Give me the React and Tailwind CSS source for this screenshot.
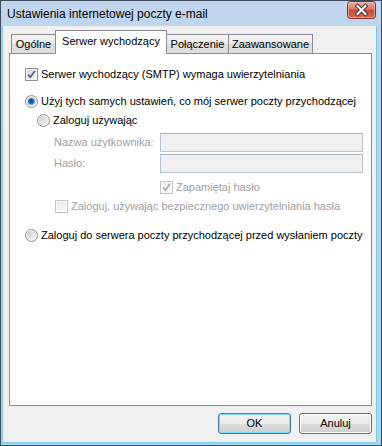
import React from "react";

const font = { fontFamily: '"Liberation Sans", Arial, sans-serif' };

function CheckBox({ checked, disabled, id }) {
  const border = disabled ? "#c2c2c2" : "#8f8f8f";
  const c1 = disabled ? "#ececec" : "#d2d6dc";
  const c2 = disabled ? "#f7f7f7" : "#f6f7f9";
  const check = disabled ? "#a9a9a9" : "#4b5f91";
  return (
    <svg width="13" height="13" viewBox="0 0 13 13" className="shrink-0">
      <defs>
        <linearGradient id={id} x1="0" y1="0" x2="1" y2="1">
          <stop offset="0" stopColor={c1} />
          <stop offset="1" stopColor={c2} />
        </linearGradient>
      </defs>
      <rect x="0.5" y="0.5" width="12" height="12" fill="#fafafa" stroke={border} />
      <rect x="2" y="2" width="9" height="9" fill={`url(#${id})`} />
      {checked && (
        <path d="M3.2 6.6 L5.3 9.2 L9.9 2.9" fill="none" stroke={check} strokeWidth="1.7" />
      )}
    </svg>
  );
}

function Radio({ checked, id }) {
  return (
    <svg width="13" height="13" viewBox="0 0 13 13" className="shrink-0">
      <defs>
        <linearGradient id={id + "o"} x1="0" y1="0" x2="1" y2="1">
          <stop offset="0" stopColor="#c9cbce" />
          <stop offset="1" stopColor="#f8f8f8" />
        </linearGradient>
        <radialGradient id={id + "d"} cx="0.45" cy="0.45" r="0.6">
          <stop offset="0" stopColor="#0f3f78" />
          <stop offset="0.55" stopColor="#2a6db3" />
          <stop offset="1" stopColor="#8fcdf3" />
        </radialGradient>
      </defs>
      <circle cx="6.5" cy="6.5" r="6" fill="#f4f4f4" stroke="#8e8f8f" />
      <circle cx="6.5" cy="6.5" r="4.6" fill={`url(#${id}o)`} />
      {checked && <circle cx="6.5" cy="6.5" r="3.6" fill={`url(#${id}d)`} />}
    </svg>
  );
}

function CloseButton() {
  return (
    <svg width="29" height="18" viewBox="0 0 29 18">
      <defs>
        <linearGradient id="closeg" x1="0" y1="0" x2="0" y2="1">
          <stop offset="0" stopColor="#eab0a5" />
          <stop offset="0.45" stopColor="#d9796a" />
          <stop offset="0.5" stopColor="#c8493a" />
          <stop offset="1" stopColor="#d26a55" />
        </linearGradient>
      </defs>
      <rect x="0.5" y="0.5" width="28" height="17" rx="3" fill="url(#closeg)" stroke="#7a3128" />
      <rect x="1.5" y="1.5" width="26" height="15" rx="2" fill="none" stroke="#f2c4bb" strokeOpacity="0.6" />
      <path d="M10.5 5 L18.5 13 M18.5 5 L10.5 13" stroke="#4d3633" strokeWidth="4" strokeLinecap="square" />
      <path d="M10.5 5 L18.5 13 M18.5 5 L10.5 13" stroke="#ffffff" strokeWidth="2" strokeLinecap="square" />
    </svg>
  );
}

function Tab({ children, className }) {
  return (
    <div
      className={
        "flex h-[19px] items-center justify-center border border-b-0 border-[#898c95] bg-[linear-gradient(to_bottom,#f3f3f3_0%,#ebebeb_50%,#dddddd_51%,#dedede_100%)] text-[11px] text-black " +
        className
      }
    >
      {children}
    </div>
  );
}

export default function App() {
  return (
    <div
      style={font}
      className="flex h-[446px] w-[382px] flex-col border border-[#3d4a5a] bg-[linear-gradient(to_bottom,#c2d6ee_0%,#bcd3ec_10%,#a9d6ef_100%)]"
    >
      {/* Title bar */}
      <div className="flex h-[25px] shrink-0 items-start justify-between pl-[6px] pr-[5px]">
        <div className="pt-[6px] text-[12px] leading-[15px] text-black">
          Ustawienia internetowej poczty e-mail
        </div>
        <CloseButton />
      </div>

      {/* Body */}
      <div className="ml-[1px] mr-[4px] mb-[2px] flex flex-1 flex-col border-x border-b border-[#7cc6ea] bg-[#f0f0f0] pl-[6px] pr-[4px]">
        {/* Tabs */}
        <div className="flex h-[27px] shrink-0 items-end pl-[2px] pt-[4px]">
          <Tab className="w-[45px]">Ogólne</Tab>
          <div className="relative z-10 -mb-px ml-[-1px] flex h-[24px] w-[112px] items-start justify-center border border-b-0 border-[#898c95] bg-white pt-[4px] text-[11px] leading-[13px] text-black">
            Serwer wychodzący
          </div>
          <Tab className="ml-[-1px] w-[63px]">Połączenie</Tab>
          <Tab className="ml-[-1px] w-[85px]">Zaawansowane</Tab>
        </div>

        {/* Panel */}
        <div className="flex h-[353px] shrink-0 flex-col border border-[#898c95] bg-white pl-[15px] pt-[14px] text-[11px] leading-[13px] text-black">
          <div className="flex h-[13px] items-center gap-[3px]">
            <CheckBox checked id="cb1" />
            <span>Serwer wychodzący (SMTP) wymaga uwierzytelniania</span>
          </div>

          <div className="mt-[14px] flex h-[13px] items-center gap-[3px]">
            <Radio checked id="r1" />
            <span>Użyj tych samych ustawień, co mój serwer poczty przychodzącej</span>
          </div>

          <div className="ml-[12px] mt-[6px] flex h-[13px] items-center gap-[3px]">
            <Radio id="r2" />
            <span>Zaloguj używając</span>
          </div>

          <div className="ml-[29px] mt-[6px] flex h-[19px] items-center">
            <span className="w-[106px] text-[#a0a0a0]">Nazwa użytkownika:</span>
            <div className="h-[19px] w-[203px] border border-[#b5c3d3] border-t-[#a7b4c4] bg-[#f0f0f0]" />
          </div>
          <div className="ml-[29px] mt-[2px] flex h-[19px] items-center">
            <span className="w-[106px] text-[#a0a0a0]">Hasło:</span>
            <div className="h-[19px] w-[203px] border border-[#b5c3d3] border-t-[#a7b4c4] bg-[#f0f0f0]" />
          </div>

          <div className="ml-[135px] mt-[8px] flex h-[13px] items-center gap-[3px] text-[#a0a0a0]">
            <CheckBox checked disabled id="cb2" />
            <span>Zapamiętaj hasło</span>
          </div>

          <div className="ml-[30px] mt-[6px] flex h-[13px] items-center gap-[3px] text-[#a0a0a0]">
            <CheckBox disabled id="cb3" />
            <span>Zaloguj, używając bezpiecznego uwierzytelniania hasła</span>
          </div>

          <div className="mt-[16px] flex h-[13px] items-center gap-[3px]">
            <Radio id="r3" />
            <span>Zaloguj do serwera poczty przychodzącej przed wysłaniem poczty</span>
          </div>
        </div>

        {/* Buttons */}
        <div className="mt-[7px] flex justify-end gap-[8px]">
          <div className="flex h-[21px] w-[73px] items-center justify-center rounded-[3px] border border-[#3c7fb1] bg-[linear-gradient(to_bottom,#f2f2f2_0%,#ebebeb_50%,#dddddd_51%,#cfcfcf_100%)] text-[11px] text-black shadow-[inset_0_0_0_1px_#7fd6f7]">
            OK
          </div>
          <div className="flex h-[21px] w-[73px] items-center justify-center rounded-[3px] border border-[#707070] bg-[linear-gradient(to_bottom,#f2f2f2_0%,#ebebeb_50%,#dddddd_51%,#cfcfcf_100%)] text-[11px] text-black shadow-[inset_0_0_0_1px_#fbfbfb]">
            Anuluj
          </div>
        </div>
      </div>
    </div>
  );
}
